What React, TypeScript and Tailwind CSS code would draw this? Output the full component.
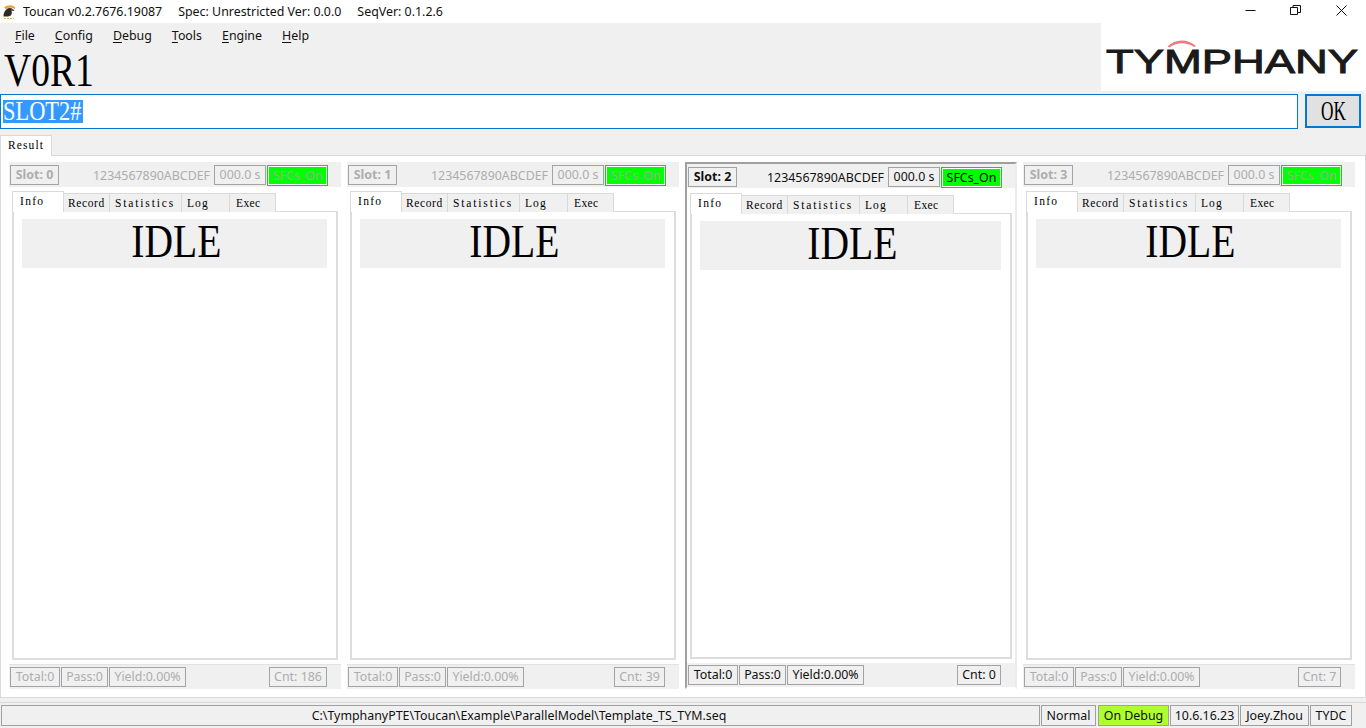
import React from "react";

const sans = "font-['Noto_Sans',sans-serif]";
const serif = "font-['Liberation_Serif',serif]";

function Box({ className = "", children }: { className?: string; children: React.ReactNode }) {
  return (
    <div className={`flex h-5 shrink-0 items-center justify-center border border-[#a3a3a3] pt-[1px] text-[12.4px] leading-none whitespace-nowrap ${className}`}>
      {children}
    </div>
  );
}

function SlotTabs() {
  const tabs: [string, string][] = [
    ["Record", "w-[46px] pl-[4px] tracking-[0.6px]"],
    ["Statistics", "w-[72px] pl-[5px] tracking-[1.85px]"],
    ["Log", "w-[48px] pl-[5px] tracking-[1.1px]"],
    ["Exec", "w-[46px] pl-[6px] tracking-[0.4px]"],
  ];
  return (
    <div className="relative z-10 flex h-[21px] items-end">
      <div className={`flex h-[21px] w-[52px] items-start border border-b-0 border-[#d9d9d9] bg-white pl-[7px] pt-[2px] text-[11.5px] leading-[14px] tracking-[1.3px] text-black ${serif}`}>
        Info
      </div>
      {tabs.map(([t, w]) => (
        <div key={t} className={`flex h-[19px] ${w} items-center border border-b-0 border-l-0 border-[#d9d9d9] bg-[#f0f0f0] pt-[1px] text-[11.5px] leading-none text-black ${serif}`}>
          {t}
        </div>
      ))}
    </div>
  );
}

function Slot({ n, cnt, cntW, active = false }: { n: number; cnt: number; cntW: string; active?: boolean }) {
  const c = active ? "text-[#111]" : "text-[#adadad]";
  return (
    <div
      className={`flex h-[527px] w-[332px] shrink-0 flex-col ${
        active ? "border-2 border-t-[#a0a0a0] border-l-[#a0a0a0] border-r-[#ececec] border-b-white" : ""
      }`}
    >
      <div className={`flex ${active ? "h-[24px] pt-[3px]" : "h-[25px] pt-[3px]"} items-start bg-[#f0f0f0] pl-[1px] pr-[13px] ${sans} ${c}`}>
        <Box className="w-[49px] font-bold">Slot: {n}</Box>
        <div className={`w-[121px] shrink-0 pt-[1px] text-[12.4px] leading-5 whitespace-nowrap ${active ? "ml-[30px]" : "ml-[34px]"}`}>1234567890ABCDEF</div>
        <Box className="w-[52px]">000.0 s</Box>
        <div className="ml-[1px] h-[21px] w-[61px] shrink-0 border border-[#00e000] bg-white p-[1px]">
          <div className={`flex h-full items-center justify-center bg-[#00ff00] pt-[1px] text-[12.4px] leading-none ${active ? "text-black" : "text-[#a4a4a4]"}`}>
            SFCs_On
          </div>
        </div>
      </div>
      <div className={`flex flex-1 flex-col px-[3px] ${active ? "pt-[5px]" : "pt-[4px]"}`}>
        <SlotTabs />
        <div className="-mt-[1px] flex-1 border-2 border-t border-[#dcdcdc] bg-white pl-[8px] pr-[9px] pt-[7px]">
          <div className={`flex h-[49px] items-center justify-center bg-[#f0f0f0] pl-[3px] text-black ${serif}`}>
            <span className="-translate-y-[2px] scale-x-[0.86] text-[46px] leading-[46px]">IDLE</span>
          </div>
        </div>
      </div>
      <div className={`mt-[4px] flex ${active ? "h-[24px] pt-[2px]" : "h-[25px] border-t border-[#e2e2e2] pt-[2px]"} items-start gap-[1px] bg-[#f0f0f0] pl-[1px] ${sans} ${c}`}>
        <Box className="w-[50px]">Total:0</Box>
        <Box className="w-[47px]">Pass:0</Box>
        <Box className="w-[77px]">Yield:0.00%</Box>
        <div className="flex-1" />
        <Box className={`mr-[14px] ${cntW}`}>Cnt: {cnt}</Box>
      </div>
    </div>
  );
}

function ToucanIcon() {
  return (
    <svg width="18" height="18" viewBox="0 0 18 18" className="ml-[1px] shrink-0">
      <path d="M2 4.5 C5 1.5 10 1.5 13 4 L13 6 C10 4.2 6 4 4 6.5 Z" fill="#f2a32e" />
      <path d="M1.5 13.5 C1.5 9 4 5.5 7.5 5 C10 5 12 6.5 12.5 8 L9.5 8 C10.5 10.5 9 13.5 6 13.5 Z" fill="#2f2a28" />
      <path d="M9.5 6 L12.5 7.5 L9.5 8 Z" fill="#8a8078" />
      <path d="M2 15.5 H12" stroke="#dcb878" strokeWidth="1" strokeDasharray="2 1" />
    </svg>
  );
}

function Logo() {
  return (
    <svg width="265" height="68" viewBox="0 0 265 68">
      <path d="M66.5 23.5 C74 15.5 87 15.5 95 23 L93 24 C86 19 76 19 68.5 24.5 Z" fill="#ec7a80" />
      <text
        x="5"
        y="50"
        fontFamily="'Liberation Sans', sans-serif"
        fontSize="34"
        fill="#1a1a1a"
        stroke="#1a1a1a"
        strokeWidth="1"
        textLength="252"
        lengthAdjust="spacingAndGlyphs"
      >
        TYMPHANY
      </text>
    </svg>
  );
}

function Status({ className = "", children }: { className?: string; children: React.ReactNode }) {
  return (
    <div className={`flex h-[21px] shrink-0 items-center justify-center border border-[#a0a0a0] pt-[1px] text-[12.4px] leading-none whitespace-nowrap text-[#111] ${className}`}>
      {children}
    </div>
  );
}

export default function App() {
  const menu: [string, string][] = [
    ["F", "ile"],
    ["C", "onfig"],
    ["D", "ebug"],
    ["T", "ools"],
    ["E", "ngine"],
    ["H", "elp"],
  ];
  return (
    <div className={`flex h-[728px] w-[1366px] flex-col overflow-hidden bg-[#f0f0f0] ${sans}`}>
      {/* title bar */}
      <div className="flex h-[23px] items-center bg-white pl-[1px] text-[12.4px] text-[#111]">
        <ToucanIcon />
        <span className="ml-[3px] whitespace-pre pt-[2px]">Toucan v0.2.7676.19087</span>
        <span className="ml-[16px] whitespace-pre pt-[2px]">Spec: Unrestricted Ver: 0.0.0</span>
        <span className="ml-[16px] whitespace-pre pt-[2px]">SeqVer: 0.1.2.6</span>
        <svg width="121" height="23" viewBox="0 0 121 23" className="ml-auto">
          <path d="M0.5 10.5 H10.5" stroke="#111" fill="none" />
          <path d="M45.5 7.5 V14.5 H52.5 V7.5 Z M48 7 V5.5 H55.5 V12.5 H53" stroke="#111" fill="none" />
          <path d="M91.5 5.5 L101.5 15.5 M101.5 5.5 L91.5 15.5" stroke="#111" fill="none" />
        </svg>
      </div>

      {/* header */}
      <div className="flex h-[71px]">
        <div className="flex flex-1 flex-col">
          <div className="flex h-[25px] items-center gap-[20px] pl-[15px] pt-[2px] text-[12.4px] text-[#111]">
            {menu.map(([a, b]) => (
              <span key={a}>
                <span className="underline underline-offset-2">{a}</span>
                {b}
              </span>
            ))}
          </div>
          <div className={`ml-[4px] mt-[-1px] origin-left scale-x-[0.8] text-[47px] leading-[46px] text-black ${serif}`}>V0R1</div>
        </div>
        <div className="h-[68px] w-[265px] bg-white">
          <Logo />
        </div>
      </div>

      {/* input row */}
      <div className="flex h-[35px] items-start">
        <div className="flex h-[35px] w-[1298px] items-center border border-[#0078d7] bg-white pl-[2px]">
          <div className="h-[23px] w-[80px] bg-[#3399ff]">
            <div className={`origin-left scale-x-[0.8] whitespace-nowrap text-[28px] leading-[21px] text-white ${serif}`}>SLOT2#</div>
          </div>
        </div>
        <div className={`ml-[7px] flex h-[34px] w-[56px] items-center justify-center border-2 border-[#0078d7] bg-[#e1e1e1] text-black ${serif}`}>
          <span className="scale-x-[0.64] text-[27px] leading-none">OK</span>
        </div>
      </div>

      {/* Result tab */}
      <div className="mt-[6px] flex h-[21px]">
        <div className={`relative z-10 flex h-[21px] w-[52px] items-start border border-b-0 border-[#d9d9d9] bg-white pl-[7px] pt-[2px] text-[11.5px] leading-[14px] tracking-[1.1px] text-black ${serif}`}>
          Result
        </div>
      </div>

      {/* page */}
      <div className="-mt-[1px] flex h-[543px] gap-[6px] border border-[#dadada] bg-white pl-[8px] pt-[6px]">
        <Slot n={0} cnt={186} cntW="w-[58px]" />
        <Slot n={1} cnt={39} cntW="w-[51px]" />
        <Slot n={2} cnt={0} cntW="w-[44px]" active />
        <Slot n={3} cnt={7} cntW="w-[43px]" />
      </div>

      {/* status bar */}
      <div className="mt-[4px] flex flex-1 items-start gap-[1px] border-t border-[#d9d9d9] pl-[1px] pt-[2px]">
        <Status className="w-[1039px] pr-[3px]">C:\TymphanyPTE\Toucan\Example\ParallelModel\Template_TS_TYM.seq</Status>
        <Status className="w-[55px]">Normal</Status>
        <Status className="ml-[1px] w-[71px] border-[#90e020] bg-[#adff2f]">On Debug</Status>
        <Status className="w-[69px]">10.6.16.23</Status>
        <Status className="w-[69px]">Joey.Zhou</Status>
        <Status className="w-[42px]">TYDC</Status>
      </div>
    </div>
  );
}
